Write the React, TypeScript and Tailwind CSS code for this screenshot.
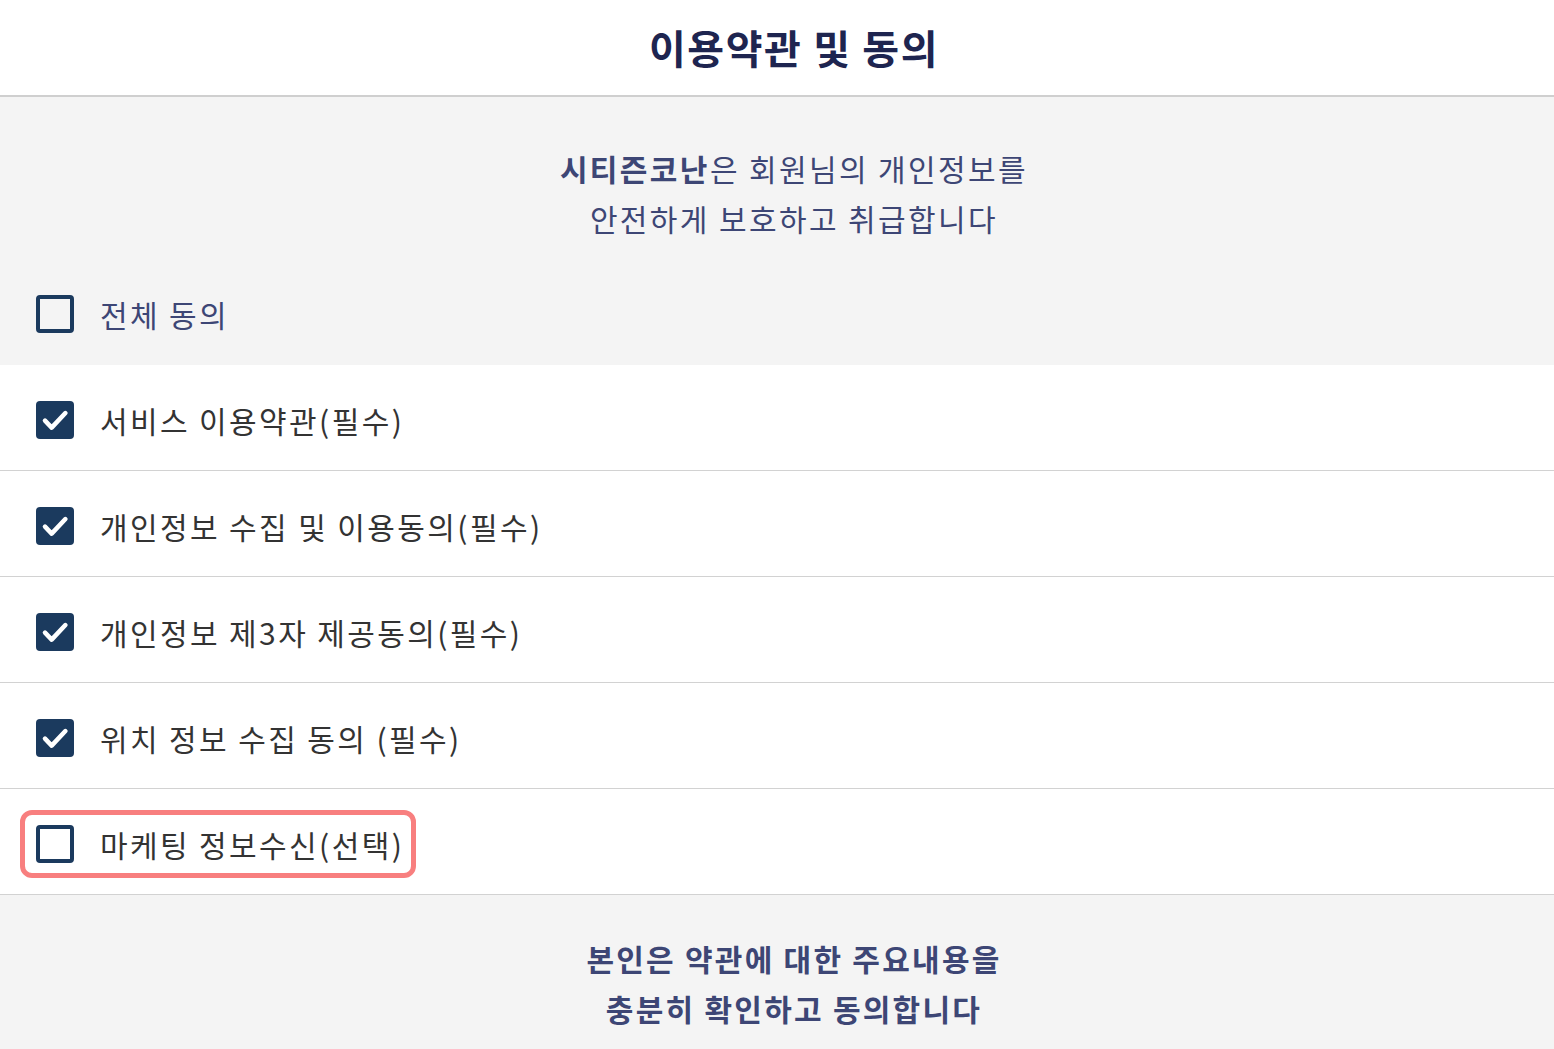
import { useState } from "react";

const font = {
  fontFamily: '"Noto Sans CJK KR", "Noto Sans", sans-serif',
};

type Term = { id: string; label: string; highlight?: boolean };

const terms: Term[] = [
  { id: "service", label: "서비스 이용약관(필수)" },
  { id: "privacy", label: "개인정보 수집 및 이용동의(필수)" },
  { id: "third", label: "개인정보 제3자 제공동의(필수)" },
  { id: "location", label: "위치 정보 수집 동의 (필수)" },
  { id: "marketing", label: "마케팅 정보수신(선택)", highlight: true },
];

const Checkbox = ({ checked }: { checked: boolean }) =>
  checked ? (
    <span className="flex h-[38px] w-[38px] shrink-0 items-center justify-center rounded-[4px] bg-[#1b3a5e]">
      <svg viewBox="0 0 24 24" className="h-[32px] w-[32px]" fill="none">
        <path
          d="M4.5 12.5l5 5.2L19.8 6.8"
          stroke="#fff"
          strokeWidth="3.4"
          strokeLinecap="round"
          strokeLinejoin="round"
        />
      </svg>
    </span>
  ) : (
    <span className="block h-[38px] w-[38px] shrink-0 rounded-[4px] border-[4px] border-[#1b3a5e] bg-transparent" />
  );

export default function App() {
  const [checked, setChecked] = useState<Record<string, boolean>>({
    service: true,
    privacy: true,
    third: true,
    location: true,
    marketing: false,
  });
  const all = terms.every((t) => checked[t.id]);

  const toggle = (id: string) => setChecked((c) => ({ ...c, [id]: !c[id] }));
  const toggleAll = () =>
    setChecked(Object.fromEntries(terms.map((t) => [t.id, !all])));

  return (
    <div className="min-h-screen w-full bg-white" style={font}>
      <header className="flex h-[97px] items-center justify-center border-b-2 border-[#cfcfcf] pb-[2px] pl-[34px]">
        <h1 className="text-[40px] font-bold leading-none tracking-[0.04em] text-[#1e2550]">
          이용약관 및 동의
        </h1>
      </header>

      <section className="bg-[#f4f4f4] px-9 pb-[32px] pt-[46px]">
        <p className="pl-[34px] text-center text-[30px] leading-[50px] tracking-[0.08em] text-[#3d4675]">
          <b className="font-bold">시티즌코난</b>은 회원님의 개인정보를
          <br />
          안전하게 보호하고 취급합니다
        </p>
        <button
          type="button"
          onClick={toggleAll}
          className="mt-[52px] flex items-center gap-[26px]"
        >
          <Checkbox checked={all} />
          <span className="text-[30px] leading-none tracking-[0.08em] text-[#3d4675]">
            전체 동의
          </span>
        </button>
      </section>

      <ul>
        {terms.map((t) => (
          <li
            key={t.id}
            className="flex h-[106px] items-center border-b border-[#d2d2d2] px-9 pt-[5px]"
          >
            <button
              type="button"
              onClick={() => toggle(t.id)}
              className={
                t.highlight
                  ? "-ml-4 flex items-center gap-[26px] rounded-[12px] border-[5px] border-[#f87f7f] py-[10px] pl-[11px] pr-[7px]"
                  : "flex items-center gap-[26px]"
              }
            >
              <Checkbox checked={checked[t.id]} />
              <span className="text-[30px] leading-none tracking-[0.08em] text-[#333]">
                {t.label}
              </span>
            </button>
          </li>
        ))}
      </ul>

      <footer className="bg-[#f4f4f4] pb-[20px] pl-[34px] pt-[38px]">
        <p className="text-center text-[30px] font-bold leading-[50px] tracking-[0.075em] text-[#3d4675]">
          본인은 약관에 대한 주요내용을
          <br />
          충분히 확인하고 동의합니다
        </p>
      </footer>
    </div>
  );
}
